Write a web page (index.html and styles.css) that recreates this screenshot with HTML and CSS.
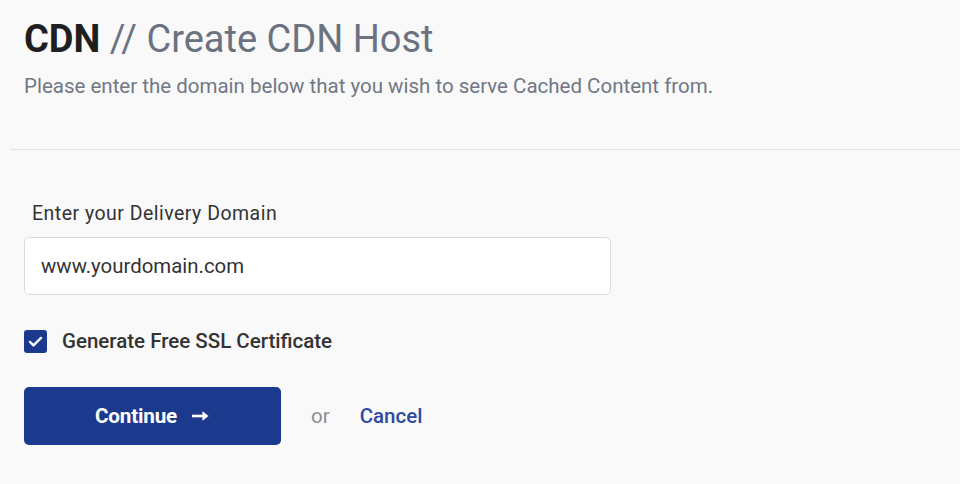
FILE: index.html
```html
<!DOCTYPE html>
<html lang="en">
<head>
<meta charset="utf-8">
<title>CDN // Create CDN Host</title>
<link rel="stylesheet" href="styles.css">
</head>
<body>
<div class="page">
  <header class="header">
    <h1 class="title"><strong>CDN</strong> <span class="title-rest">// Create CDN Host</span></h1>
    <p class="subtitle">Please enter the domain below that you wish to serve Cached Content from.</p>
  </header>
  <form class="form">
    <label class="field-label" for="domain">Enter your Delivery Domain</label>
    <div class="input-box" id="domain">www.yourdomain.com</div>
    <div class="check-row">
      <span class="checkbox">
        <svg viewBox="0 0 24 24" width="19" height="19"><path d="M5 12.5l4.5 4.5L19 7.5" fill="none" stroke="#fff" stroke-width="3" stroke-linecap="round" stroke-linejoin="round"/></svg>
      </span>
      <span class="check-label">Generate Free SSL Certificate</span>
    </div>
    <div class="actions">
      <button type="button" class="btn-primary">Continue
        <svg class="arrow" viewBox="0 0 20 12" width="19" height="12"><path d="M1 6h13" stroke="#fff" stroke-width="2.8" fill="none"/><path d="M12 1L18.5 6 12 11z" fill="#fff"/></svg>
      </button>
      <span class="or">or</span>
      <a class="cancel" href="#">Cancel</a>
    </div>
  </form>
</div>
</body>
</html>
```
FILE: styles.css
```css
html, body {
  margin: 0;
  padding: 0;
  background: #f9f9fa;
  font-family: Roboto, "Liberation Sans", sans-serif;
}
.page {
  padding-left: 10px;
}
.header {
  border-bottom: 1px solid #e3e3e5;
  padding: 17px 0 51px 14px;
}
.title {
  margin: 0;
  font-size: 38px;
  line-height: 44px;
  font-weight: 400;
  color: #6b7280;
}
.title strong {
  color: #1f1f1f;
  font-weight: 700;
}
.subtitle {
  margin: 13px 0 0;
  font-size: 20.5px;
  line-height: 24px;
  color: #717784;
}
.form {
  padding: 52px 0 0 14px;
  display: flex;
  flex-direction: column;
  align-items: flex-start;
}
.field-label {
  margin-left: 8px;
  font-size: 19.5px;
  line-height: 23px;
  letter-spacing: 0.48px;
  color: #333;
}
.input-box {
  margin-top: 12px;
  box-sizing: border-box;
  width: 587px;
  height: 58px;
  background: #fff;
  border: 1px solid #dcdcdf;
  border-radius: 5px;
  padding-left: 16px;
  display: flex;
  align-items: center;
  font-size: 20.4px;
  color: #333;
}
.check-row {
  margin-top: 35px;
  display: flex;
  align-items: center;
  gap: 15px;
  height: 23px;
}
.checkbox {
  width: 23px;
  height: 23px;
  border-radius: 3px;
  background: #1b3a8d;
  display: flex;
  align-items: center;
  justify-content: center;
}
.check-label {
  font-size: 20.5px;
  line-height: 23px;
  color: #333;
  font-weight: 500;
}
.actions {
  margin-top: 34px;
  display: flex;
  align-items: center;
}
.btn-primary {
  width: 257px;
  height: 58px;
  border: none;
  border-radius: 5px;
  background: #1b3a8d;
  color: #fff;
  font-family: Roboto, "Liberation Sans", sans-serif;
  font-size: 20.7px;
  font-weight: 700;
  letter-spacing: -0.2px;
  display: flex;
  align-items: center;
  justify-content: center;
  gap: 14px;
  padding: 0;
}
.arrow {
  display: block;
}
.or {
  margin-left: 30px;
  font-size: 20.5px;
  color: #8a8d93;
}
.cancel {
  margin-left: 30px;
  font-size: 20.5px;
  font-weight: 500;
  color: #2d4aa0;
  text-decoration: none;
}
```
